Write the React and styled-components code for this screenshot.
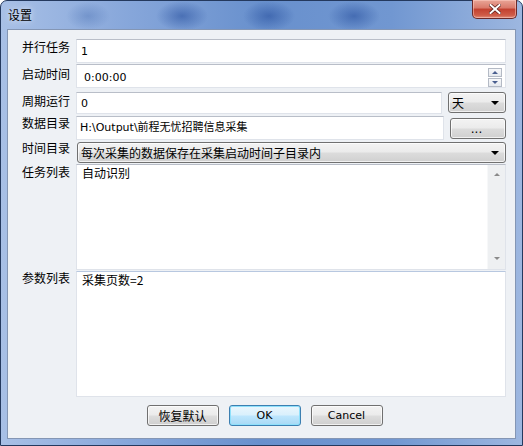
import React from "react";
import styled, { createGlobalStyle } from "styled-components";

const GlobalStyle = createGlobalStyle`
  body {
    margin: 0;
    background: #ffffff;
  }
`;

const cjk = `"Noto Sans CJK SC", sans-serif`;
const latin = `"DejaVu Sans", "Noto Sans CJK SC", sans-serif`;

const Window = styled.div`
  width: 523px;
  height: 446px;
  box-sizing: border-box;
  display: flex;
  flex-direction: column;
  padding: 0 6px 6px;
  border: 1px solid #24395e;
  border-radius: 7px 7px 0 0;
  background:
    radial-gradient(ellipse 22px 14px at 87px 15px, rgba(60, 100, 170, 0.35), transparent),
    radial-gradient(ellipse 26px 15px at 181px 15px, rgba(35, 75, 155, 0.55), transparent),
    radial-gradient(ellipse 26px 15px at 268px 15px, rgba(35, 75, 155, 0.55), transparent),
    radial-gradient(ellipse 26px 15px at 353px 15px, rgba(35, 75, 155, 0.55), transparent),
    linear-gradient(90deg, #a8c0e6 0%, #86a6da 25%, #6890cd 50%, #7197d1 75%, #9db7e0 100%);
`;

const TitleBar = styled.div`
  height: 28px;
  display: flex;
  justify-content: space-between;
  align-items: flex-start;
`;

const Title = styled.span`
  font-family: ${cjk};
  font-size: 12px;
  line-height: 14px;
  color: #000;
  margin: 7px 0 0 1px;
  text-shadow: 0 0 6px rgba(255, 255, 255, 0.9);
`;

const CloseButton = styled.div`
  width: 45px;
  height: 19px;
  margin: -1px -1px 0 0;
  box-sizing: border-box;
  border: 1px solid #6b2a2a;
  border-top: none;
  border-radius: 0 0 5px 5px;
  background: linear-gradient(#e9a597 0%, #d9796a 45%, #c2402f 50%, #cf5c48 85%, #e0907f 100%);
  display: flex;
  align-items: center;
  justify-content: center;
  box-shadow: inset 0 0 0 1px rgba(255, 210, 200, 0.5);
`;

const Client = styled.div`
  flex: 1;
  display: flex;
  flex-direction: column;
  border: 1px solid #8496b4;
  background: #eef1f5;
  padding: 9px 9px 0 14px;
`;

const Row = styled.div`
  display: grid;
  grid-template-columns: 48px 1fr;
  column-gap: 6px;
  margin-top: ${(p) => p.$gap || 0}px;
`;

const Label = styled.div`
  font-family: ${cjk};
  font-size: 12px;
  line-height: 14px;
  color: #000;
  white-space: nowrap;
  margin-top: ${(p) => p.$top}px;
`;

const Field = styled.div`
  display: flex;
  gap: 6px;
`;

const TextBox = styled.div`
  flex: 1;
  position: relative;
  height: ${(p) => p.$h}px;
  box-sizing: border-box;
  border: 1px solid #dfe3ea;
  border-top-color: #b9bec8;
  background: #ffffff;
  font-family: ${latin};
  font-size: 11px;
  line-height: 13px;
  color: #000;
  padding: ${(p) => p.$pt || 5}px 0 0 ${(p) => p.$pl || 4}px;
`;

const Spinner = styled.div`
  position: absolute;
  right: 3px;
  top: 3px;
  display: flex;
  flex-direction: column;
  gap: 1px;
`;

const SpinButton = styled.div`
  width: 14px;
  height: 9px;
  box-sizing: border-box;
  border: 1px solid #b4bac5;
  background: linear-gradient(#f7f8fa, #e6e9ee);
  display: flex;
  align-items: center;
  justify-content: center;
`;

const Combo = styled.div`
  width: ${(p) => (p.$w ? `${p.$w}px` : "auto")};
  flex: ${(p) => (p.$w ? "none" : 1)};
  height: ${(p) => p.$h || 21}px;
  box-sizing: border-box;
  border: 1px solid #707070;
  border-radius: 3px;
  background: linear-gradient(#f3f3f3 0%, #ebebeb 48%, #dcdcdc 52%, #d0d0d0 100%);
  box-shadow: inset 0 0 0 1px rgba(255, 255, 255, 0.7);
  display: flex;
  align-items: center;
  justify-content: ${(p) => (p.$center ? "center" : "space-between")};
  padding: 0 6px 0 3px;
  font-family: ${latin};
  font-size: 12px;
  color: #000;
  margin-left: ${(p) => p.$ml || 0}px;
  margin-top: ${(p) => p.$mt || 0}px;
`;

const ComboText = styled.span`
  font-family: ${cjk};
  font-size: 12px;
  line-height: 14px;
`;

const Arrow = styled.span`
  width: 0;
  height: 0;
  border-left: 4px solid transparent;
  border-right: 4px solid transparent;
  border-top: 4px solid #000;
`;

const TextArea = styled.div`
  flex: 1;
  display: flex;
  height: ${(p) => p.$h}px;
  box-sizing: border-box;
  border: 1px solid #dfe3ea;
  border-top-color: ${(p) => p.$topColor || "#b9bec8"};
  background: #ffffff;
`;

const AreaText = styled.div`
  flex: 1;
  font-family: ${cjk};
  font-size: 12px;
  line-height: 14px;
  color: #000;
  padding: 1px 0 0 5px;
`;

const ScrollBar = styled.div`
  width: 17px;
  background: #eef0f2;
  border-left: 1px solid #f7f8f9;
  display: flex;
  flex-direction: column;
  justify-content: space-between;
  align-items: center;
  padding: 8px 0 9px;
`;

const Tri = styled.span`
  width: 0;
  height: 0;
  border-left: ${(p) => p.$s}px solid transparent;
  border-right: ${(p) => p.$s}px solid transparent;
  ${(p) => (p.$up ? "border-bottom" : "border-top")}: ${(p) => p.$s}px solid ${(p) => p.$c};
`;

const Buttons = styled.div`
  display: flex;
  justify-content: center;
  gap: 10px;
  margin-top: 8px;
  padding-left: 1px;
`;

const Button = styled.button`
  width: 72px;
  height: 21px;
  box-sizing: border-box;
  border: 1px solid ${(p) => (p.$default ? "#3c7fb1" : "#707070")};
  border-radius: 3px;
  background: ${(p) =>
    p.$default
      ? "linear-gradient(#eaf6fd 0%, #d9f0fc 48%, #bee6fd 52%, #a7d9f5 100%)"
      : "linear-gradient(#f3f3f3 0%, #ebebeb 48%, #dddddd 52%, #cfcfcf 100%)"};
  box-shadow: inset 0 0 0 1px ${(p) => (p.$default ? "#8ee0fb" : "rgba(255,255,255,0.7)")};
  font-family: ${latin};
  font-size: 11px;
  color: #000;
  padding: 0;
  cursor: pointer;
`;

const ButtonCjk = styled.span`
  font-family: ${cjk};
  font-size: 12px;
`;

export default function App() {
  return (
    <>
      <GlobalStyle />
      <Window>
        <TitleBar>
          <Title>设置</Title>
          <CloseButton>
            <svg width="12" height="10" viewBox="0 0 12 10">
              <path
                d="M1.5 1 L10.5 9 M10.5 1 L1.5 9"
                stroke="#5a1f1a"
                strokeWidth="3.4"
                strokeLinecap="square"
              />
              <path
                d="M1.5 1 L10.5 9 M10.5 1 L1.5 9"
                stroke="#ffffff"
                strokeWidth="2"
                strokeLinecap="square"
              />
            </svg>
          </CloseButton>
        </TitleBar>
        <Client>
          <Row>
            <Label $top={1}>并行任务</Label>
            <TextBox $h={24}>1</TextBox>
          </Row>
          <Row $gap={1}>
            <Label $top={3}>启动时间</Label>
            <TextBox $h={24} $pl={7} $pt={6}>
              0:00:00
              <Spinner>
                <SpinButton>
                  <Tri $up $s={3} $c="#4a5f8f" />
                </SpinButton>
                <SpinButton>
                  <Tri $s={3} $c="#4a5f8f" />
                </SpinButton>
              </Spinner>
            </TextBox>
          </Row>
          <Row $gap={4}>
            <Label $top={2}>周期运行</Label>
            <Field>
              <TextBox $h={22} $pt={4}>0</TextBox>
              <Combo $w={58} $h={21}>
                <ComboText>天</ComboText>
                <Arrow />
              </Combo>
            </Field>
          </Row>
          <Row $gap={2}>
            <Label $top={0}>数据目录</Label>
            <Field>
              <TextBox $h={24} $pt={4} $pl={3}>
                H:\Output\前程无忧招聘信息采集
              </TextBox>
              <Combo $w={56} $h={21} $center $mt={2}>
                ...
              </Combo>
            </Field>
          </Row>
          <Row $gap={2}>
            <Label $top={-1}>时间目录</Label>
            <Combo $h={21} $ml={1}>
              <ComboText>每次采集的数据保存在采集启动时间子目录内</ComboText>
              <Arrow />
            </Combo>
          </Row>
          <Row $gap={1}>
            <Label $top={1}>任务列表</Label>
            <TextArea $h={106}>
              <AreaText>自动识别</AreaText>
              <ScrollBar>
                <Tri $up $s={3} $c="#8a8a8a" />
                <Tri $s={3} $c="#8a8a8a" />
              </ScrollBar>
            </TextArea>
          </Row>
          <Row $gap={1}>
            <Label $top={0}>参数列表</Label>
            <TextArea $h={126} $topColor="#b8c8e0">
              <AreaText>采集页数=2</AreaText>
            </TextArea>
          </Row>
          <Buttons>
            <Button>
              <ButtonCjk>恢复默认</ButtonCjk>
            </Button>
            <Button $default>OK</Button>
            <Button>Cancel</Button>
          </Buttons>
        </Client>
      </Window>
    </>
  );
}
